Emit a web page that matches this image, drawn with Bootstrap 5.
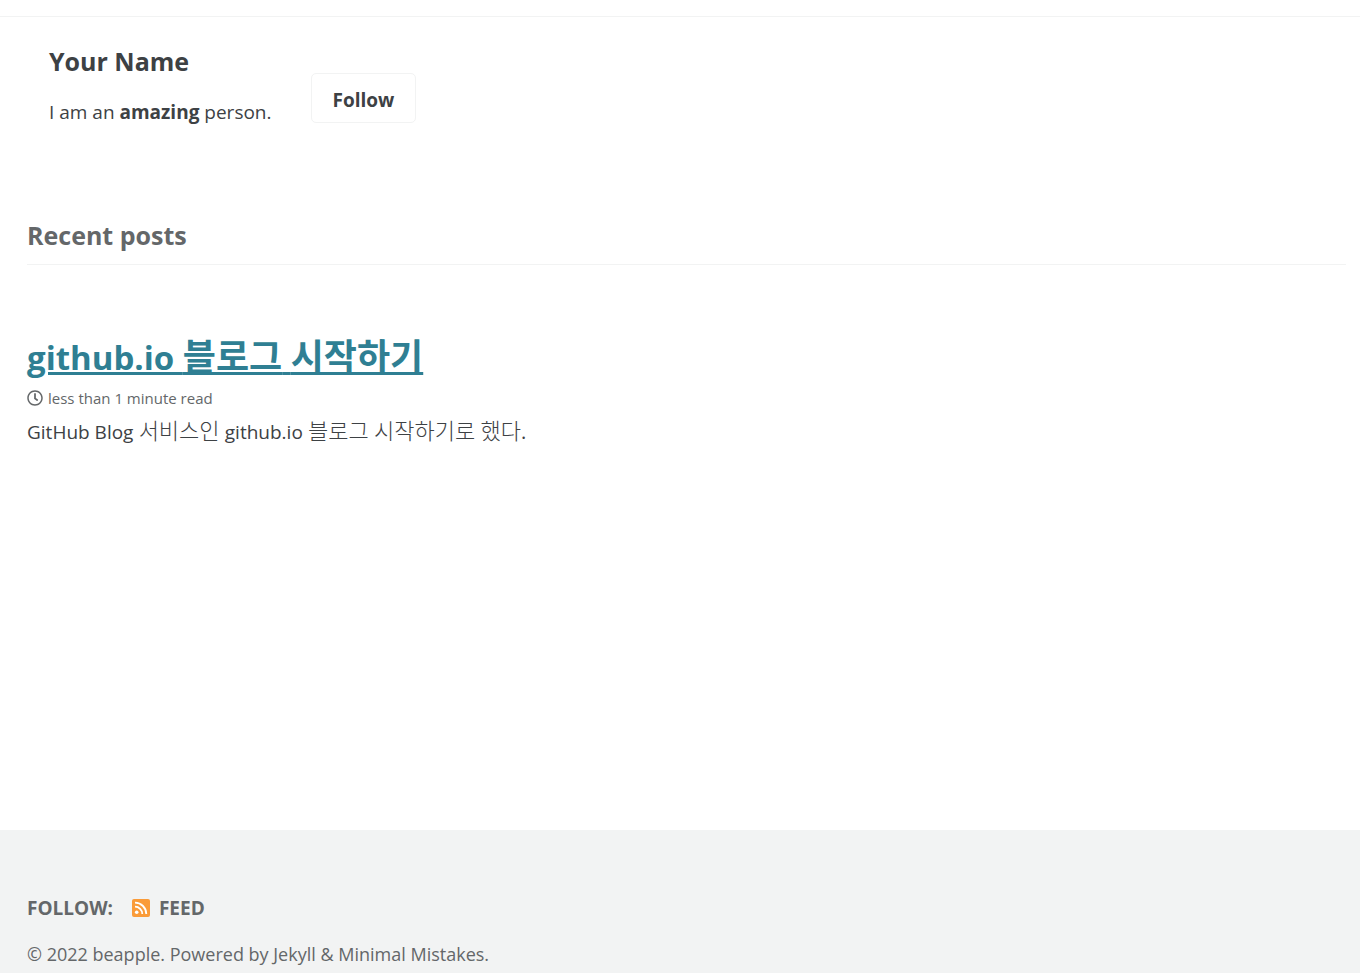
<!DOCTYPE html>
<html lang="en">
<head>
<meta charset="utf-8">
<meta name="viewport" content="width=device-width, initial-scale=1">
<title>Recent posts</title>
<link href="https://cdn.jsdelivr.net/npm/bootstrap@5.3.0/dist/css/bootstrap.min.css" rel="stylesheet">
<style>
body{font-family:"Open Sans","Noto Sans CJK KR",sans-serif;font-size:19px;line-height:28px;color:#3d4144;background:#fff}
.masthead{height:17px;border-bottom:1px solid #f2f3f3}
.author{padding:27px 49px 0;gap:39px}
.author-name{font-size:25px;line-height:34px;font-weight:700;margin:0 0 20px}
.follow-btn{margin-top:29px;height:50px;padding:4px 21px 0;font-size:19px;font-weight:700;color:#3d4144;background:#fff;border:1px solid #f2f3f3;border-radius:5px}
.posts{padding:91px 14px 0 27px}
.section-title{font-size:25px;line-height:36px;font-weight:700;color:#646769;border-bottom:1px solid #f2f3f3;padding-bottom:11px;margin:0}
.post-title{font-size:33px;line-height:44px;font-weight:700;margin:71px 0 0}
.post-title a{color:#2f7f93;text-decoration-thickness:3px}
.post-title :lang(ko){font-size:36px;line-height:1}
.read-time{font-size:15px;line-height:24px;color:#646769;gap:5px;margin:6px 0 8px}
.excerpt{font-size:20px}
.excerpt .latin{font-size:19px}
.excerpt :lang(ko){font-size:22px;line-height:1;font-weight:300}
.site-footer{background:#f2f3f3;color:#646769;padding:64px 27px 5px}
.site-footer a{color:inherit;text-decoration:none}
.follow-links{gap:18px;font-weight:700;margin-bottom:18px}
.copyright{font-size:18px;margin:0}
</style>
</head>
<body class="d-flex flex-column min-vh-100">
<header class="masthead"></header>
<main class="flex-grow-1">
<div class="author d-flex align-items-start">
<div><h3 class="author-name">Your Name</h3><p class="mb-0">I am an <strong>amazing</strong> person.</p></div>
<button type="button" class="btn follow-btn">Follow</button>
</div>
<section class="posts">
<h3 class="section-title">Recent posts</h3>
<article>
<h2 class="post-title"><a href="#">github.io <span lang="ko">블로그</span> <span lang="ko">시작하기</span></a></h2>
<p class="read-time d-flex align-items-center"><svg width="16" height="16" viewBox="0 0 512 512" fill="currentColor" aria-hidden="true"><path d="M256 8C119 8 8 119 8 256s111 248 248 248 248-111 248-248S393 8 256 8zm0 448c-110 0-200-90-200-200S146 56 256 56s200 90 200 200-90 200-200 200zm62-104-85-62c-3-2-5-6-5-10V116c0-7 5-12 12-12h32c7 0 12 5 12 12v142l67 48c5 4 6 12 2 17l-18 26c-4 5-12 7-17 3z"/></svg>less than 1 minute read</p>
<p class="excerpt mb-0"><span class="latin">GitHub Blog</span> <span lang="ko">서비스인</span> <span class="latin">github.io</span> <span lang="ko">블로그</span> <span lang="ko">시작하기로</span> <span lang="ko">했다</span>.</p>
</article>
</section>
</main>
<footer class="site-footer">
<div class="follow-links d-flex"><span>FOLLOW:</span><a href="#" class="d-flex align-items-center gap-2"><svg width="20" height="20" viewBox="0 0 20 20" aria-hidden="true"><rect x="1" y="1" width="18" height="18" rx="2" fill="#fa9b39"/><g fill="none" stroke="#fff" stroke-width="1.800"><path d="M4 4.700A11.300 11.300 0 0 1 15.300 16M4 8.700A7.300 7.300 0 0 1 11.300 16"/></g><circle cx="5.700" cy="14.300" r="1.800" fill="#fff"/></svg>FEED</a></div>
<p class="copyright">© 2022 beapple. Powered by <a href="#">Jekyll</a> &amp; <a href="#">Minimal Mistakes</a>.</p>
</footer>
<script src="https://cdn.jsdelivr.net/npm/bootstrap@5.3.0/dist/js/bootstrap.bundle.min.js"></script>
</body>
</html>
